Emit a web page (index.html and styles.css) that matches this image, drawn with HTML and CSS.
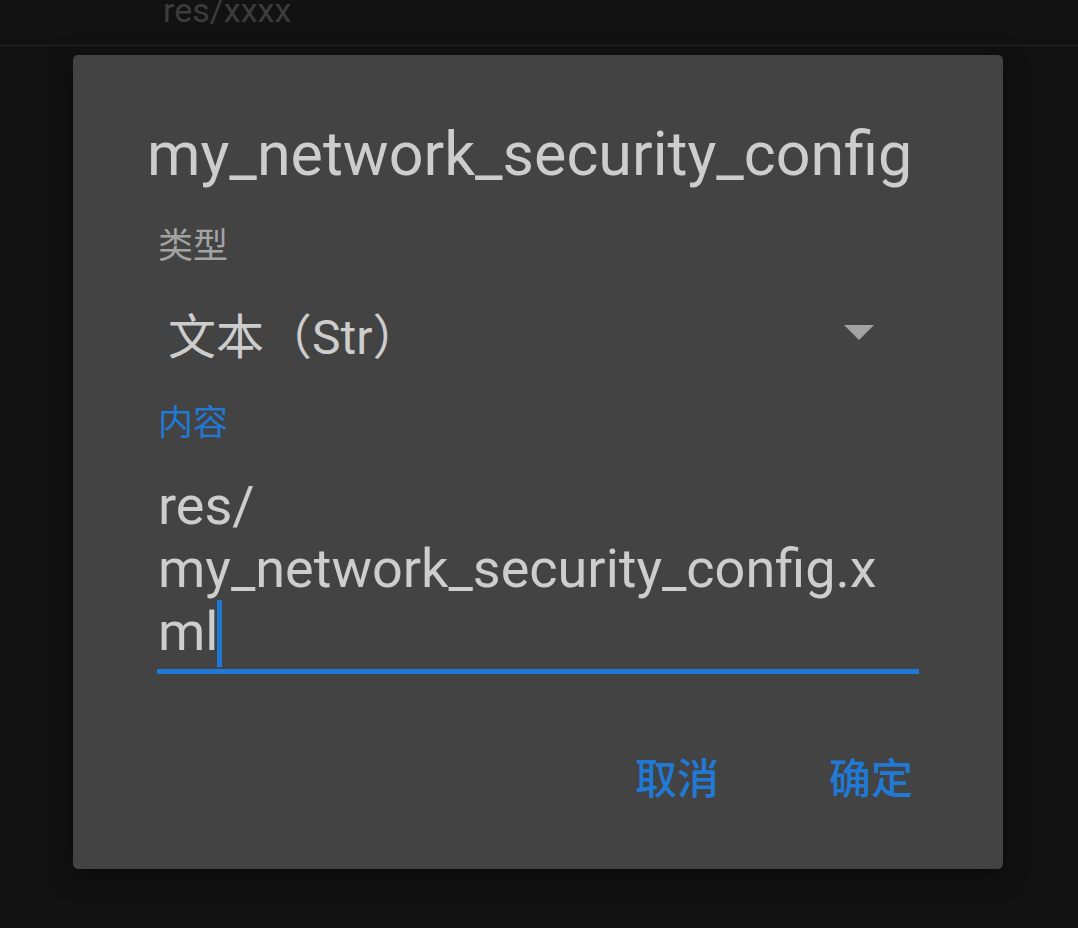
FILE: index.html
```html
<!DOCTYPE html>
<html lang="zh-CN">
<head>
<meta charset="utf-8">
<title>my_network_security_config</title>
<link rel="stylesheet" href="styles.css">
</head>
<body>
<div class="list-item">
  <div class="list-text">res/xxxx</div>
</div>
<div class="dialog">
  <h1 class="title">my_network_security_config</h1>
  <div class="label">类型</div>
  <div class="select">
    <span class="select-value">文本（Str）</span>
    <svg class="arrow" width="30" height="16" viewBox="0 0 30 16"><polygon points="0,0 30,0 15,15" fill="#a3a3a3"/></svg>
  </div>
  <div class="label label-active">内容</div>
  <div class="field">
    <div class="field-text">res/<br>my_network_security_config.x<br>ml<span class="cursor"></span></div>
  </div>
  <div class="actions">
    <span class="btn">取消</span>
    <span class="btn">确定</span>
  </div>
</div>
</body>
</html>
```
FILE: styles.css
```css
html, body {
  margin: 0;
  padding: 0;
  background: #121212;
  height: 100%;
  overflow: hidden;
  font-family: Roboto, "Noto Sans CJK SC", sans-serif;
}
.list-item {
  height: 45px;
  border-bottom: 1px solid #242424;
  overflow: hidden;
}
.list-text {
  margin-top: -15px;
  padding-left: 163px;
  font-size: 34px;
  line-height: 50px;
  color: #3c3c3c;
}
.dialog {
  margin: 9px 0 0 73px;
  width: 930px;
  height: 814px;
  box-sizing: border-box;
  background: #434343;
  border-radius: 5px;
  box-shadow: 0 6px 24px rgba(0,0,0,0.5);
  padding: 0 84px 0 85px;
  display: flex;
  flex-direction: column;
}
.title {
  margin: 64px 0 0 -11px;
  font-size: 61px;
  font-weight: 400;
  line-height: 70px;
  color: #cdcdcd;
  white-space: nowrap;
}
.label {
  margin-top: 38px;
  font-size: 35px;
  line-height: 40px;
  color: #a3a3a3;
}
.select {
  margin-top: 26px;
  height: 80px;
  display: flex;
  align-items: center;
  justify-content: space-between;
  padding: 0 45px 0 10px;
}
.select-value {
  font-size: 48px;
  color: #cdcdcd;
}
.arrow {
  display: block;
}
.label-active {
  margin-top: 31px;
  color: #2079d4;
}
.field {
  margin-top: 30px;
  border-bottom: 5px solid #2079d4;
  padding-bottom: 6px;
  width: 762px;
  margin-left: -1px;
}
.field-text {
  font-size: 54px;
  line-height: 63px;
  color: #cdcdcd;
  padding-left: 1px;
}
.cursor {
  display: inline-block;
  width: 5px;
  height: 67px;
  background: #2079d4;
  margin-bottom: -17px;
  margin-left: -2px;
}
.actions {
  margin-top: 76px;
  display: flex;
  justify-content: flex-end;
  gap: 110px;
  padding-right: 6px;
}
.btn {
  font-size: 42px;
  line-height: 60px;
  color: #2079d4;
  font-weight: 500;
}
```
